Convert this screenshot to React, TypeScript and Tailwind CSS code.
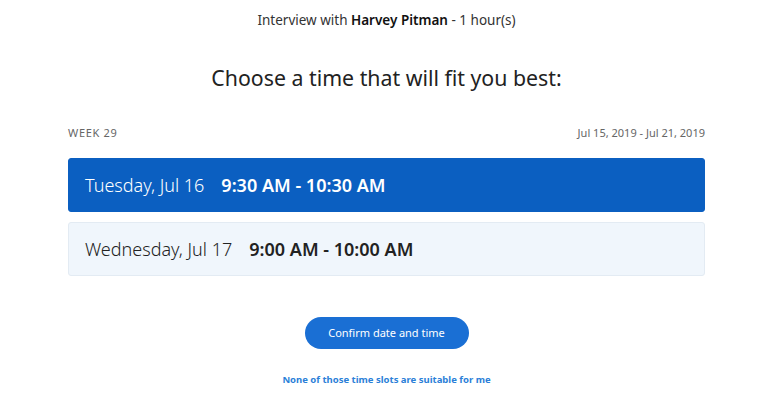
import { useState } from 'react';

const slots = [
  { day: 'Tuesday, Jul 16', time: '9:30 AM - 10:30 AM' },
  { day: 'Wednesday, Jul 17', time: '9:00 AM - 10:00 AM' },
];

export default function App() {
  const [selected, setSelected] = useState(0);

  return (
    <div className="w-[768px] h-[412px] bg-white overflow-hidden">
      <div className="w-[773px] text-[#222] font-['Noto_Sans',sans-serif]">
        {/* Header */}
        <div className="pt-[11px] text-center text-[13.5px] leading-[18px] text-[#333]">
          Interview with <span className="font-semibold text-[#111]">Harvey Pitman</span> - 1 hour(s)
        </div>

        <h1 className="mt-[34px] text-center text-[21.3px] leading-[30px] text-[#222]">
          Choose a time that will fit you best:
        </h1>

        <div className="mx-[68px] mt-[33px]">
          <div className="flex justify-between text-[11px] leading-[14px] text-[#666]">
            <span className="tracking-[0.06em]">WEEK 29</span>
            <span>Jul 15, 2019 - Jul 21, 2019</span>
          </div>

          <div className="mt-[18px] flex flex-col gap-[10px]">
            {slots.map((s, i) => (
              <button
                key={i}
                onClick={() => setSelected(i)}
                className={`flex h-[54px] items-center gap-[17px] rounded-[3px] border px-[16px] text-left text-[18px] ${
                  i === selected
                    ? 'border-[#0b5fc1] bg-[#0b5fc1] text-white'
                    : 'border-[#e3ebf3] bg-[#f0f6fc] text-[#222]'
                }`}
              >
                <span className="font-light">{s.day}</span>
                <span className="font-semibold">{s.time}</span>
              </button>
            ))}
          </div>
        </div>

        <div className="mt-[41px] flex flex-col items-center">
          <button className="h-[32px] w-[164px] rounded-full bg-[#1a6fd4] text-[11px] text-white">
            Confirm date and time
          </button>
          <a className="mt-[24px] text-[9.5px] font-bold text-[#2b7fd8] cursor-pointer">
            None of those time slots are suitable for me
          </a>
        </div>
      </div>
    </div>
  );
}
